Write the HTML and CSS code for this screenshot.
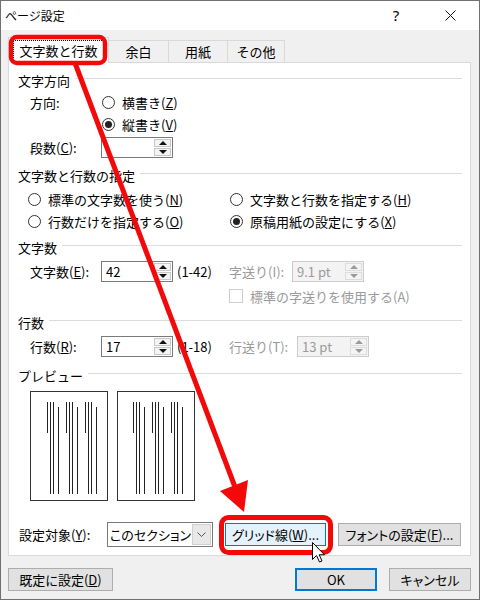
FILE: index.html
```html
<!DOCTYPE html>
<html lang="ja">
<head>
  <meta charset="UTF-8">
  <title>ページ設定</title>
  <link rel="stylesheet" href="styles.css">
</head>
<body>

<div class="dialog">
  <div class="titlebar">
    <div class="title">ページ設定</div>
    <div class="caption-btn help">?</div>
    <div class="caption-btn close">
      <svg width="11" height="11" viewBox="0 0 11 11"><path d="M0.5 0.5L10.5 10.5M10.5 0.5L0.5 10.5" stroke="#111" stroke-width="1"/></svg>
    </div>
  </div>

  <!-- タブ -->
  <div class="tabs">
    <div class="tab active"><span class="focus">文字数と行数</span></div>
    <div class="tab tab-margin">余白</div>
    <div class="tab tab-paper">用紙</div>
    <div class="tab tab-other">その他</div>
  </div>

  <div class="panel">
    <div class="group g-dir">
      <div class="group-title">文字方向</div>
      <div class="rows">
        <div class="row">
          <span class="label">方向:</span>
          <span class="radio"><i></i><span>横書き(<u>Z</u>)</span></span>
        </div>
        <div class="row">
          <span class="label"></span>
          <span class="radio on"><i></i><span>縦書き(<u>V</u>)</span></span>
        </div>
        <div class="row spin-row">
          <span class="label">段数(<u>C</u>):</span>
          <span class="spin"><span class="val"></span><span class="arrows"><b class="up"></b><b class="down"></b></span></span>
        </div>
      </div>
    </div>

    <div class="group g-spec">
      <div class="group-title">文字数と行数の指定</div>
      <div class="rows radio-grid">
        <span class="radio"><i></i><span>標準の文字数を使う(<u>N</u>)</span></span>
        <span class="radio"><i></i><span>文字数と行数を指定する(<u>H</u>)</span></span>
        <span class="radio"><i></i><span>行数だけを指定する(<u>O</u>)</span></span>
        <span class="radio on"><i></i><span>原稿用紙の設定にする(<u>X</u>)</span></span>
      </div>
    </div>

    <div class="group">
      <div class="group-title">文字数</div>
      <div class="rows">
        <div class="row">
          <span class="label">文字数(<u>E</u>):</span>
          <span class="spin"><span class="val">42</span><span class="arrows"><b class="up"></b><b class="down"></b></span></span>
          <span class="range">(1-42)</span>
          <span class="pitch-label disabled">字送り(I):</span>
          <span class="spin off"><span class="val">9.1 pt</span><span class="arrows"><b class="up"></b><b class="down"></b></span></span>
        </div>
        <div class="row check-row">
          <span class="check disabled"><i></i><span>標準の字送りを使用する(A)</span></span>
        </div>
      </div>
    </div>

    <div class="group">
      <div class="group-title">行数</div>
      <div class="rows">
        <div class="row">
          <span class="label">行数(<u>R</u>):</span>
          <span class="spin"><span class="val">17</span><span class="arrows"><b class="up"></b><b class="down"></b></span></span>
          <span class="range">(1-18)</span>
          <span class="pitch-label line-pitch disabled">行送り(T):</span>
          <span class="spin off"><span class="val">13 pt</span><span class="arrows"><b class="up"></b><b class="down"></b></span></span>
        </div>
      </div>
    </div>

    <div class="group g-preview">
      <div class="group-title">プレビュー</div>
      <div class="preview">
        <div class="page">
          <svg width="76" height="108" viewBox="0 0 76 108"><path d="M16.5 10V41M19.5 10V102M22.5 10V102M27.5 15V102M35.5 10V41M38.5 10V102M41.5 10V102M46.5 15V102M54.5 10V41M57.5 10V102M60.5 10V102M65.5 15V102" stroke="#222" stroke-width="1"/></svg>
        </div>
        <div class="page">
          <svg width="76" height="108" viewBox="0 0 76 108"><path d="M15.5 10V41M18.5 10V102M21.5 10V102M26.5 15V102M34.5 10V41M37.5 10V102M40.5 10V102M45.5 15V102M53.5 10V41M56.5 10V102M59.5 10V102M64.5 15V102" stroke="#222" stroke-width="1"/></svg>
        </div>
      </div>
    </div>

    <div class="apply-row">
      <span class="apply-label">設定対象(<u>Y</u>):</span>
      <span class="select">
        <span class="select-text">このセクション</span>
        <span class="select-arrow"><svg width="9" height="5" viewBox="0 0 9 5"><path d="M0.5 0.5L4.5 4.5L8.5 0.5" fill="none" stroke="#555" stroke-width="1"/></svg></span>
      </span>
      <span class="btn grid-btn">グリッド線(<u>W</u>)...</span>
      <span class="btn font-btn">フォントの設定(<u>F</u>)...</span>
    </div>
  </div>

  <div class="footer">
    <span class="btn default-btn">既定に設定(<u>D</u>)</span>
    <div class="footer-right">
      <span class="btn ok-btn">OK</span>
      <span class="btn cancel-btn">キャンセル</span>
    </div>
  </div>

  <!-- 説明用の赤い枠と矢印 -->
  <svg class="annotation" width="480" height="600" viewBox="0 0 480 600">
    <rect x="11" y="37" width="94" height="26" rx="6" fill="none" stroke="#f20a0a" stroke-width="4.5"/>
    <rect x="221.5" y="517.5" width="109" height="35" rx="7" fill="none" stroke="#f20a0a" stroke-width="5"/>
    <path d="M75 63L235 487" stroke="#f20a0a" stroke-width="5"/>
    <polygon points="244,512 248,480 220,491" fill="#f20a0a"/>
    <path d="M312.5 542.5V559.5L316.5 555.5L319.5 562L322 561L319.2 554.8H324.5Z" fill="#fff" stroke="#000" stroke-width="1"/>
  </svg>
</div>

</body>
</html>
```

FILE: styles.css
```css
body {
  margin: 0;
  font-family: "Noto Sans CJK JP", "Noto Sans", sans-serif;
  font-size: 13px;
  line-height: 1;
  color: #000;
}

u {
  text-decoration: underline;
  text-underline-offset: 1px;
}

.dialog {
  position: relative;
  width: 480px;
  height: 600px;
  box-sizing: border-box;
  border: 1px solid #707070;
  background-color: #f0f0f0;
  overflow: hidden;
}

.titlebar {
  display: flex;
  align-items: center;
  height: 29px;
  padding: 0 2px 0 4px;
  background-color: #fff;
}

.title {
  flex: 1;
  font-size: 12px;
}

.caption-btn {
  width: 54px;
  display: flex;
  justify-content: center;
  align-items: center;
}

.help {
  font-family: "Noto Sans", sans-serif;
  font-size: 15px;
}

/* タブ */
.tabs {
  position: relative;
  z-index: 1;
  display: flex;
  align-items: flex-end;
  height: 33px;
  margin-left: 7px;
}

.tab {
  box-sizing: border-box;
  height: 22px;
  margin-bottom: 1px;
  margin-left: -1px;
  display: flex;
  justify-content: center;
  align-items: center;
  border: 1px solid #d9d9d9;
  border-bottom: none;
  background-color: #f0f0f0;
}

.tab.active {
  width: 101px;
  height: 26px;
  margin: 0;
  background-color: #fff;
}

.tab .focus {
  padding: 3px 5px 4px;
  border: 1px dotted #000;
}

.tab-margin { width: 61px; }
.tab-paper { width: 60px; }
.tab-other { width: 58px; }

.panel {
  box-sizing: border-box;
  width: 463px;
  height: 494px;
  margin: -1px 0 0 7px;
  padding: 7px 8px 0 9px;
  border: 1px solid #d9d9d9;
  background-color: #fff;
}

.group + .group {
  margin-top: 5px;
}

.group.g-spec {
  margin-top: 7px;
}

.group.g-preview {
  margin-top: 8px;
}

.group-title {
  display: flex;
  align-items: center;
  gap: 5px;
  height: 20px;
}

.group-title::after {
  content: "";
  flex: 1;
  border-top: 1px solid #dcdcdc;
  transform: translateY(-2px);
}

.rows {
  margin-top: 3px;
}

.g-dir .rows {
  margin-top: 1px;
}

.row {
  display: flex;
  align-items: center;
  height: 22px;
  padding-left: 12px;
}

.spin-row {
  margin-top: 1px;
}

.label {
  width: 71px;
}

.radio, .check {
  display: inline-flex;
  align-items: center;
  gap: 7px;
}

.row .radio {
  margin-left: 1px;
}

.radio i {
  box-sizing: border-box;
  width: 13px;
  height: 13px;
  border: 1px solid #333;
  border-radius: 50%;
  background-color: #fff;
  display: flex;
  justify-content: center;
  align-items: center;
}

.radio.on i::after {
  content: "";
  width: 7px;
  height: 7px;
  border-radius: 50%;
  background-color: #222;
}

.check i {
  box-sizing: border-box;
  width: 14px;
  height: 14px;
  border: 1px solid #cfcfcf;
  background-color: #fff;
}

.disabled {
  color: #9a9a9a;
}

.radio-grid {
  display: grid;
  grid-template-columns: 202px auto;
  grid-auto-rows: 22px;
  align-items: center;
  padding-left: 10px;
}

/* スピンボックス */
.spin {
  box-sizing: border-box;
  display: flex;
  align-items: center;
  width: 72px;
  height: 21px;
  border: 1px solid #7a7a7a;
  background-color: #fff;
}

.spin .val {
  flex: 1;
  padding-left: 4px;
}

.arrows {
  display: flex;
  flex-direction: column;
  gap: 1px;
  width: 17px;
  height: 17px;
  margin-right: 1px;
}

.arrows b {
  flex: 1;
  display: flex;
  justify-content: center;
  align-items: center;
  border: 1px solid #c8c8c8;
  background-color: #f4f4f4;
}

.arrows .up::after {
  content: "";
  border-left: 4px solid transparent;
  border-right: 4px solid transparent;
  border-bottom: 4px solid #111;
}

.arrows .down::after {
  content: "";
  border-left: 4px solid transparent;
  border-right: 4px solid transparent;
  border-top: 4px solid #111;
}

.spin.off {
  border-color: #cccccc;
  background-color: #f3f3f3;
  color: #9a9a9a;
}

.spin.off .arrows b {
  border-color: #dcdcdc;
}

.spin.off .arrows .up::after {
  border-bottom-color: #9a9a9a;
}

.spin.off .arrows .down::after {
  border-top-color: #9a9a9a;
}

.range {
  width: 52px;
  margin-left: 4px;
}

.pitch-label {
  width: 63px;
}

.pitch-label.line-pitch {
  width: 68px;
}

.check-row {
  margin-top: 3px;
  padding-left: 211px;
}

/* プレビュー */
.preview {
  display: flex;
  gap: 9px;
  margin-top: 6px;
  padding-left: 12px;
}

.page {
  box-sizing: border-box;
  width: 78px;
  height: 110px;
  border: 1px solid #333;
  background-color: #fff;
}

.page svg {
  display: block;
}

.apply-row {
  display: flex;
  align-items: center;
  height: 25px;
  margin-top: 21px;
  padding-left: 1px;
}

.apply-label {
  width: 88px;
}

.select {
  box-sizing: border-box;
  display: flex;
  width: 106px;
  height: 25px;
  border: 1px solid #7a7a7a;
  background-color: #fff;
}

.select-text {
  flex: 1;
  display: flex;
  align-items: center;
  padding-left: 2px;
  white-space: nowrap;
  font-feature-settings: "palt";
}

.select-arrow {
  width: 18px;
  margin: 1px;
  display: flex;
  justify-content: center;
  align-items: center;
  border: 1px solid #d0d0d0;
  background-color: #e8e8e8;
}

.btn {
  box-sizing: border-box;
  display: flex;
  justify-content: center;
  align-items: center;
  height: 23px;
  border: 1px solid #adadad;
  background-color: #e1e1e1;
  white-space: nowrap;
  font-feature-settings: "palt";
}

.grid-btn {
  width: 101px;
  margin-left: 12px;
  border-color: #0078d7;
  background-color: #e5f1fb;
}

.font-btn {
  width: 123px;
  margin-left: 12px;
}

.footer {
  display: flex;
  justify-content: space-between;
  margin-top: 12px;
  padding: 0 8px 0 7px;
}

.footer .btn {
  height: 23px;
}

.default-btn {
  width: 105px;
}

.footer-right {
  display: flex;
  gap: 12px;
}

.ok-btn, .cancel-btn {
  width: 82px;
}

.ok-btn {
  border-color: #0078d7;
  box-shadow: inset 0 0 0 1px #0078d7;
}

.annotation {
  position: absolute;
  z-index: 10;
  top: -1px;
  left: -1px;
  pointer-events: none;
}
```
